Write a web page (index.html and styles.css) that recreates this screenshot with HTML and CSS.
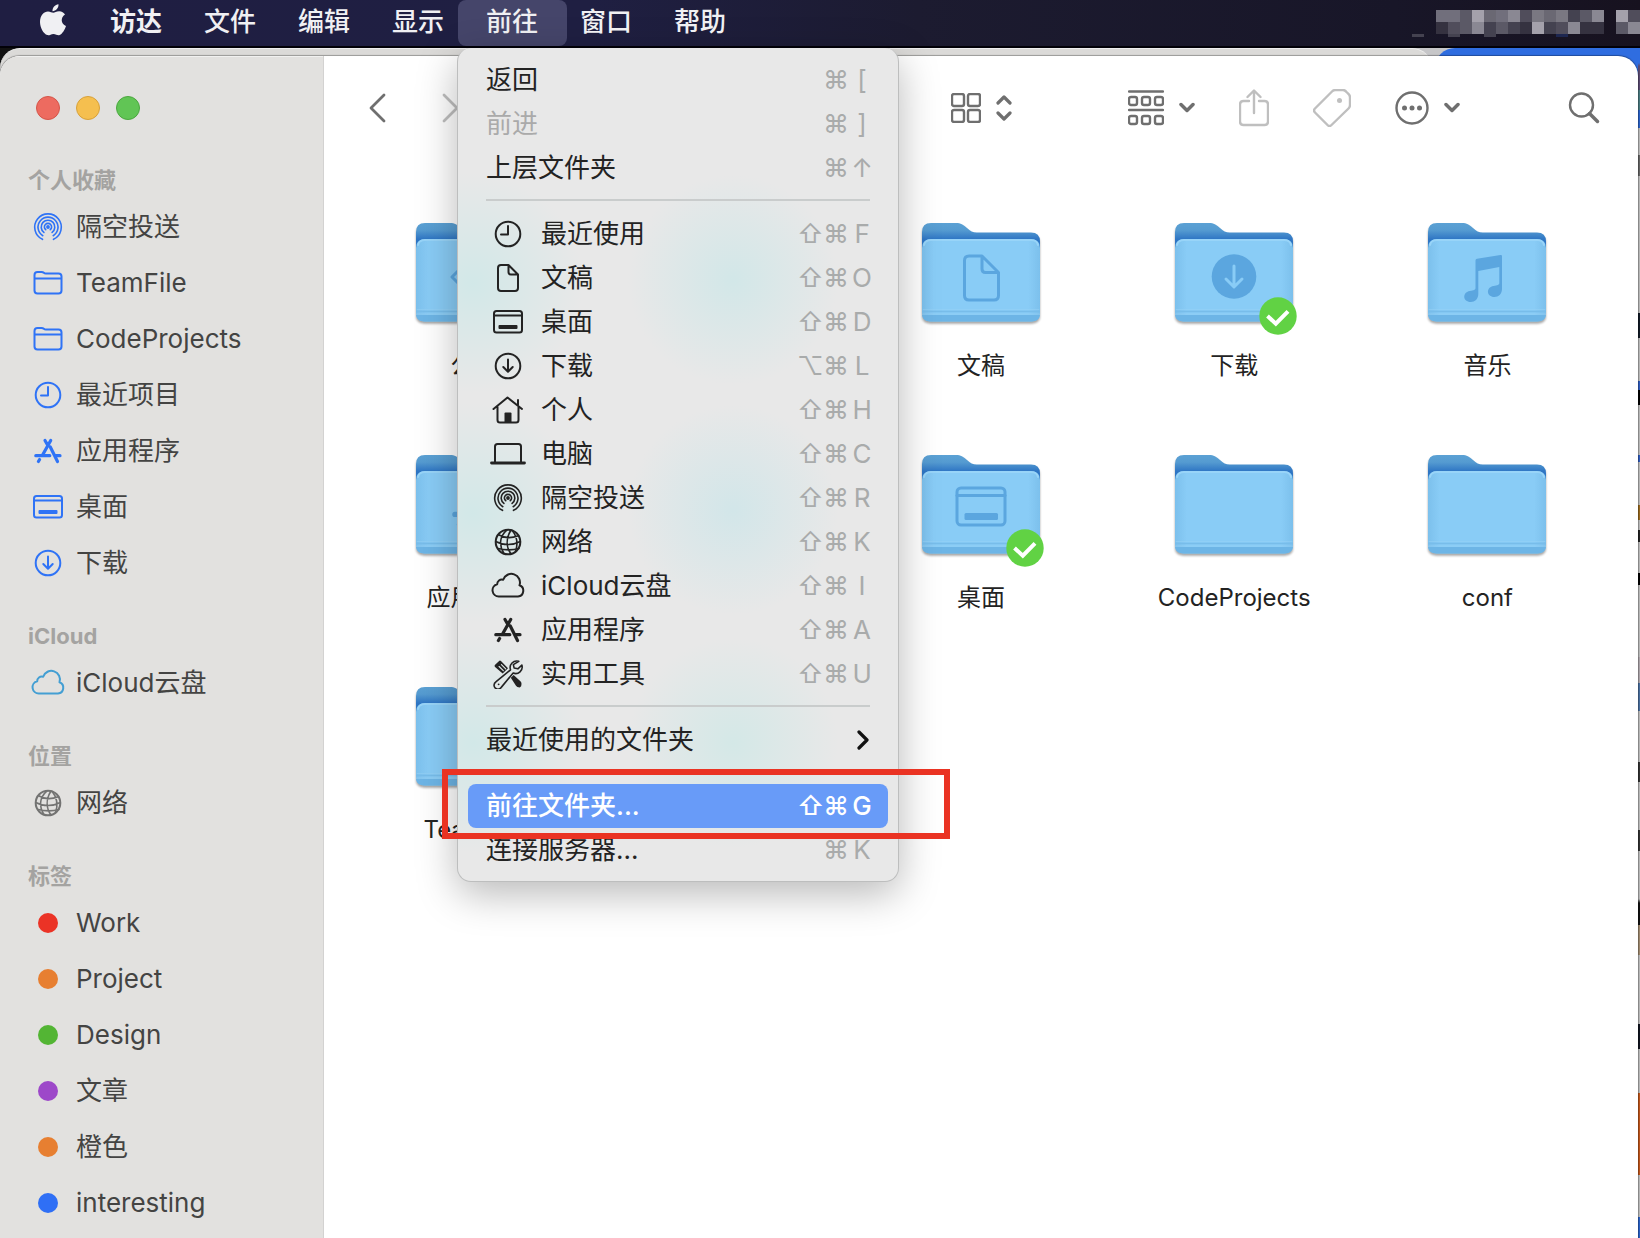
FILE: index.html
```html
<!DOCTYPE html>
<html lang="zh-CN">
<head>
  <meta charset="UTF-8" />
  <meta name="viewport" content="width=device-width, initial-scale=1.0" />
  <title>访达</title>
  <link rel="stylesheet" href="styles.css">
</head>
<body>
  <!-- shared icons -->
  <svg class="sprite" aria-hidden="true">
    <defs>
      <linearGradient id="back" x1="0" y1="0" x2="0" y2="1">
        <stop offset="0" stop-color="#5ba1d4" />
        <stop offset="0.08" stop-color="#559bd1" />
        <stop offset="0.18" stop-color="#2f76c4" />
      </linearGradient>
      <linearGradient id="front" x1="0" y1="0" x2="1" y2="0">
        <stop offset="0" stop-color="#7cc0ec" />
        <stop offset="0.1" stop-color="#89ccf6" />
        <stop offset="0.9" stop-color="#89ccf6" />
        <stop offset="1" stop-color="#7cc0ec" />
      </linearGradient>
    </defs>
    <symbol id="airdrop" viewBox="0 0 30 30">
      <circle cx="15" cy="15" r="1.900" fill="currentColor" stroke="none" />
      <path stroke-width="1.600" d="M9.500 27.300A13.300 13.300 0 1 1 20.500 27.300M9.800 23.700A10 10 0 1 1 20.200 23.700M10.900 20.400A6.800 6.800 0 1 1 19.100 20.400M12.700 17.700A3.600 3.600 0 1 1 17.300 17.700" />
    </symbol>
    <symbol id="folder" viewBox="0 0 30 30">
      <path d="M1.500 22.500V7q0-3 3-3h4q1.500 0 2.300.8t2.200.8h12.500q3 0 3 3v13.900q0 3-3 3h-21q-3 0-3-3zM1.500 10.500h27" />
    </symbol>
    <symbol id="clock" viewBox="0 0 30 30">
      <circle cx="15" cy="15" r="12.300" /><path d="M15 7v8.500H8" />
    </symbol>
    <symbol id="apps" viewBox="0 0 30 30">
      <path stroke-width="3.200" d="M17.700 4.500 9.300 19.500M12 4.500l2 3.500M17.300 11 24.500 25.500M2.800 19.700h14M22.500 19.700h4.500M6.600 23.500l-1.200 2" />
    </symbol>
    <symbol id="desktop" viewBox="0 0 30 30">
      <rect x="1" y="4" width="28" height="21.500" rx="2.500" /><path d="M1 8.500h28" />
      <rect x="5.500" y="18" width="19" height="4" rx="1" fill="currentColor" stroke="none" />
    </symbol>
    <symbol id="download" viewBox="0 0 30 30">
      <circle cx="15" cy="15" r="12.300" /><path d="M15 8.500v12M10.300 16l4.700 4.700 4.700-4.700" />
    </symbol>
    <symbol id="cloud" viewBox="0 0 34 30">
      <path d="M8 25.500a6.200 6.200 0 0 1-1.800-12.200 4.600 4.600 0 0 1 6-4.600 8.600 8.600 0 0 1 16.300 5.600 5.800 5.800 0 0 1-1.500 11.200z" />
    </symbol>
    <symbol id="globe" viewBox="0 0 30 30">
      <circle cx="15" cy="15" r="12.300" />
      <path d="M14 2.800c-8 7-8 16-3 23.800M18 3c-5 8-5 17 0 24M19 3.300c5 6 6 14 3.500 21.500M5.500 7.800c6 3.500 13 3.500 20 1M2.800 14.500c7 4 17 4 24.500 0M5 21.500c6 1.500 14 2 21 0" stroke-width="1.600" />
    </symbol>
    <symbol id="doc" viewBox="0 0 30 30">
      <path d="M15.500 2H8Q5 2 5 5v20q0 3 3 3h14q3 0 3-3V11.500zV9q0 2.500 2.500 2.500H25" />
    </symbol>
    <symbol id="home" viewBox="0 0 34 30">
      <path d="M2.500 14 16.500 2.500 31 14M6.500 12v13q0 2.500 2.500 2.500h16q2.500 0 2.500-2.500V12M27 10V5" />
      <path d="M13.500 27v-8.500q0-1 1-1h5q1 0 1 1V27z" fill="currentColor" stroke="none" />
    </symbol>
    <symbol id="laptop" viewBox="0 0 36 30">
      <path d="M5 23.500V7.500Q5 5 7.500 5h21Q31 5 31 7.500v16" /><path d="M1.500 24h33" stroke-width="2.800" />
    </symbol>
    <symbol id="tools" viewBox="0 0 32 32">
      <path fill="currentColor" stroke="none" d="M2 6.500 6.500 2q1-.8 2 .2l7.500 7.600-5.700 5.700L2.200 8.500q-.9-1-.2-2zM19 20l3-3 7.500 7q1.500 1.500.5 5l-1.500 1.500q-3-.5-4-2z" />
      <path d="M6.500 8 11 12.500M9 6l4.500 4.500" stroke="#e2e9e8" stroke-width="1.200" />
      <path d="M27.500 2.500a7 7 0 0 0-8.800 9L3 24.500a4.200 4.200 0 1 0 6 5.500L21.500 15a7 7 0 0 0 9.300-8.500l-4.300 4-4-1-.8-3.500z" fill="#e2e9e8" stroke-width="1.700" />
      <circle cx="6" cy="27" r="1" fill="currentColor" stroke="none" />
    </symbol>
    <symbol id="bigfolder" viewBox="0 0 118 100">
      <path fill="url(#back)" d="M0 9q0-9 9-9h25c5 0 7 1.500 11 5 3.500 3 5.500 4.500 10 4.500h54q9 0 9 9V90H0z" />
      <path fill="url(#front)" d="M0 25q0-8.500 8.500-8.500h101q8.500 0 8.500 8.500v65q0 8.500-8.500 8.500H8.500Q0 98.500 0 90z" />
      <path fill="#6db5e6" d="M0 92h118q-1 6.500-8.500 6.500H8.500Q1 98.500 0 92z" />
      <path stroke="#78bdea" stroke-width="1.500" d="M0 88.500h118" />
      <path stroke="#98d1f5" stroke-width="1" d="M1 91h116M1 86.500h116" opacity=".5" />
      <path stroke="#98d4f8" fill="none" d="M2 22q1-5 7-5h100q6 0 7 5" />
    </symbol>
    <symbol id="check" viewBox="0 0 38 38">
      <circle cx="19" cy="19" r="18.700" fill="#61d244" />
      <path d="m8.500 19 8.300 7.700L29 14.300" fill="none" stroke="#fff" stroke-width="4" stroke-linecap="butt" stroke-linejoin="miter" />
    </symbol>
    <symbol id="chevron" viewBox="0 0 16 12"><path d="m2 2.500 6 6 6-6" stroke-width="3.500" /></symbol>
  </svg>

  <header class="menubar">
    <button class="apple" aria-label="Apple">
      <svg viewBox="0 0 26 32" width="26" height="32"><path d="M18.500 0.300c.2 3.800-2.500 6.700-6 6.900C12.300 3.800 15 .7 18.500.3zM13.200 8.700c1.600 0 3-1.400 6-1.400 2.600.1 4.600 1.300 5.800 3.200-4.700 3-4.200 9.500 1 11.500-1 3.400-3.700 8-6.300 9-2.200.8-3.600-1.100-6.300-1.100-2.600 0-4 1.900-6.100 1.200C3.500 29.900 0 23.500 0 18c0-6.700 4-10.600 8-10.600 2.300 0 3.900 1.300 5.200 1.300z" /></svg>
    </button>
    <ul class="menus">
      <li><button class="menu-title app-name">访达</button></li>
      <li><button class="menu-title">文件</button></li>
      <li><button class="menu-title">编辑</button></li>
      <li><button class="menu-title">显示</button></li>
      <li class="open">
        <button class="menu-title">前往</button>
        <ul class="dropdown">
          <li><button class="item"><span>返回</span><kbd><i>⌘</i><i>[</i></kbd></button></li>
          <li><button class="item" disabled><span>前进</span><kbd><i>⌘</i><i>]</i></kbd></button></li>
          <li><button class="item"><span>上层文件夹</span><kbd><i>⌘</i><i>↑</i></kbd></button></li>
          <li class="separator"></li>
          <li><button class="item"><svg class="icon"><use href="#clock" /></svg><span>最近使用</span><kbd><i>⇧</i><i>⌘</i><i>F</i></kbd></button></li>
          <li><button class="item"><svg class="icon"><use href="#doc" /></svg><span>文稿</span><kbd><i>⇧</i><i>⌘</i><i>O</i></kbd></button></li>
          <li><button class="item"><svg class="icon"><use href="#desktop" /></svg><span>桌面</span><kbd><i>⇧</i><i>⌘</i><i>D</i></kbd></button></li>
          <li><button class="item"><svg class="icon"><use href="#download" /></svg><span>下载</span><kbd><i>⌥</i><i>⌘</i><i>L</i></kbd></button></li>
          <li><button class="item"><svg class="icon"><use href="#home" /></svg><span>个人</span><kbd><i>⇧</i><i>⌘</i><i>H</i></kbd></button></li>
          <li><button class="item"><svg class="icon"><use href="#laptop" /></svg><span>电脑</span><kbd><i>⇧</i><i>⌘</i><i>C</i></kbd></button></li>
          <li><button class="item"><svg class="icon"><use href="#airdrop" /></svg><span>隔空投送</span><kbd><i>⇧</i><i>⌘</i><i>R</i></kbd></button></li>
          <li><button class="item"><svg class="icon"><use href="#globe" /></svg><span>网络</span><kbd><i>⇧</i><i>⌘</i><i>K</i></kbd></button></li>
          <li><button class="item"><svg class="icon"><use href="#cloud" /></svg><span>iCloud云盘</span><kbd><i>⇧</i><i>⌘</i><i>I</i></kbd></button></li>
          <li><button class="item"><svg class="icon"><use href="#apps" /></svg><span>应用程序</span><kbd><i>⇧</i><i>⌘</i><i>A</i></kbd></button></li>
          <li><button class="item"><svg class="icon"><use href="#tools" /></svg><span>实用工具</span><kbd><i>⇧</i><i>⌘</i><i>U</i></kbd></button></li>
          <li class="separator"></li>
          <li><button class="item"><span>最近使用的文件夹</span><svg class="submenu" viewBox="0 0 12 20"><path d="m2 2 8 8-8 8" stroke-width="3.200" /></svg></button></li>
          <li class="separator"></li>
          <li class="marked"><button class="item selected"><span>前往文件夹...</span><kbd><i>⇧</i><i>⌘</i><i>G</i></kbd></button></li>
          <li><button class="item"><span>连接服务器...</span><kbd><i>⌘</i><i>K</i></kbd></button></li>
        </ul>
      </li>
      <li><button class="menu-title">窗口</button></li>
      <li><button class="menu-title">帮助</button></li>
    </ul>
    <!-- status area, masked out -->
    <svg class="mosaic" viewBox="0 0 228 46" width="228" height="46" shape-rendering="crispEdges">
      <g fill="#716f7c"><path d="M24 10h24v12H24zM84 10h12v12H84z" /></g>
      <g fill="#5b5966"><path d="M48 10h12v24H48zM84 22h12v12H84zM168 10h12v12h-12zM204 22h12v12h-12z" /></g>
      <g fill="#a4a1ab"><path d="M60 10h12v12H60zM120 22h12v12h-12zM204 10h12v12h-12z" /></g>
      <g fill="#8a8893"><path d="M60 22h12v12H60zM96 10h12v12H96zM156 22h12v12h-12zM180 10h12v12h-12zM216 22h12v12h-12z" /></g>
      <g fill="#6a6873"><path d="M72 10h12v12H72zM132 10h12v12h-12z" /></g>
      <g fill="#7a7882"><path d="M120 10h12v12h-12zM144 10h12v12h-12z" /></g>
      <g fill="#504d5b"><path d="M36 22h12v12H36zM108 10h12v12h-12zM144 22h12v12h-12zM216 10h12v12h-12z" /></g>
      <g fill="#444250"><path d="M0 34h12v3H0zM72 22h12v15H72zM96 22h12v12H96zM132 22h12v12h-12zM156 10h12v12h-12zM36 34h12v3H36z" /></g>
      <g fill="#353240"><path d="M24 22h12v12H24zM108 22h12v12h-12zM168 22h24v12h-24z" /></g>
      <path fill="#1d2650" d="M144 34h12v3h-12z" />
    </svg>
  </header>

  <main class="screen">
    <div class="behind">
      <div class="behind-gray"></div>
      <div class="behind-blue"></div>
    </div>

    <div class="window">
      <aside class="sidebar">
        <div class="lights">
          <button class="light close" aria-label="关闭"></button>
          <button class="light minimize" aria-label="最小化"></button>
          <button class="light zoom" aria-label="缩放"></button>
        </div>

        <nav class="section">
          <h2>个人收藏</h2>
          <a href="#"><svg class="icon"><use href="#airdrop" /></svg>隔空投送</a>
          <a href="#"><svg class="icon"><use href="#folder" /></svg>TeamFile</a>
          <a href="#"><svg class="icon"><use href="#folder" /></svg>CodeProjects</a>
          <a href="#"><svg class="icon"><use href="#clock" /></svg>最近项目</a>
          <a href="#"><svg class="icon"><use href="#apps" /></svg>应用程序</a>
          <a href="#"><svg class="icon"><use href="#desktop" /></svg>桌面</a>
          <a href="#"><svg class="icon"><use href="#download" /></svg>下载</a>
        </nav>
        <nav class="section">
          <h2>iCloud</h2>
          <a href="#"><svg class="icon cyan"><use href="#cloud" /></svg>iCloud云盘</a>
        </nav>
        <nav class="section">
          <h2>位置</h2>
          <a href="#"><svg class="icon gray"><use href="#globe" /></svg>网络</a>
        </nav>
        <nav class="section">
          <h2>标签</h2>
          <a href="#"><span class="dot red"></span>Work</a>
          <a href="#"><span class="dot orange"></span>Project</a>
          <a href="#"><span class="dot green"></span>Design</a>
          <a href="#"><span class="dot purple"></span>文章</a>
          <a href="#"><span class="dot orange"></span>橙色</a>
          <a href="#"><span class="dot blue"></span>interesting</a>
        </nav>
      </aside>

      <section class="content">
        <div class="toolbar">
          <button class="tool nav-back" aria-label="返回"><svg viewBox="0 0 18 30" width="18" height="30"><path d="M16 2 3 15l13 13" stroke-width="2.800" /></svg></button>
          <button class="tool" aria-label="前进" disabled><svg viewBox="0 0 18 30" width="18" height="30"><path d="m2 2 13 13L2 28" stroke-width="2.800" /></svg></button>
          <button class="tool view" aria-label="显示方式">
            <svg viewBox="0 0 30 30" width="30" height="30"><rect x="1" y="1" width="12" height="12" rx="2" /><rect x="17" y="1" width="12" height="12" rx="2" /><rect x="1" y="17" width="12" height="12" rx="2" /><rect x="17" y="17" width="12" height="12" rx="2" /></svg>
            <svg viewBox="0 0 16 28" width="16" height="28"><path d="m2 9 6-6 6 6M2 19l6 6 6-6" stroke-width="3.200" /></svg>
          </button>
          <button class="tool group" aria-label="分组">
            <svg viewBox="0 0 36 36" width="36" height="36"><path d="M1 1.500h34M1 20h34" /><rect x="1" y="7" width="8" height="8" rx="2" /><rect x="14" y="7" width="8" height="8" rx="2" /><rect x="27" y="7" width="8" height="8" rx="2" /><rect x="1" y="26" width="8" height="8" rx="2" /><rect x="14" y="26" width="8" height="8" rx="2" /><rect x="27" y="26" width="8" height="8" rx="2" /></svg>
            <svg width="16" height="12"><use href="#chevron" /></svg>
          </button>
          <button class="tool" aria-label="共享" disabled><svg viewBox="0 0 30 38" width="30" height="38"><path d="M10 12H4.500Q1 12 1 15.500v17Q1 36 4.500 36h21q3.500 0 3.500-3.500v-17Q29 12 25.500 12H20M15 24V2M8.500 8 15 1.500 21.500 8" /></svg></button>
          <button class="tool" aria-label="标签" disabled><svg viewBox="0 0 38 38" width="38" height="38"><path d="M19 2.500Q20.500 1 22.500 1H30q2 0 3.500 2l1.500 1.500q2 1.500 2 4V16q0 2-1.500 3.500L18.500 36q-2 2-4 0L2 23.500q-2-2 0-4z" /><circle cx="26.500" cy="11.500" r="2.500" fill="currentColor" stroke="none" /></svg></button>
          <button class="tool" aria-label="更多">
            <svg viewBox="0 0 34 34" width="34" height="34"><circle cx="17" cy="17" r="15.500" /><g fill="currentColor" stroke="none"><circle cx="9.500" cy="17" r="2.500" /><circle cx="17" cy="17" r="2.500" /><circle cx="24.500" cy="17" r="2.500" /></g></svg>
            <svg width="16" height="12"><use href="#chevron" /></svg>
          </button>
          <button class="tool search" aria-label="搜索"><svg viewBox="0 0 32 32" width="32" height="32"><circle cx="13.500" cy="13" r="11.500" /><path d="m21.500 21.500 8 8" stroke-width="3.500" /></svg></button>
        </div>

        <ul class="files">
          <li><a href="#" class="file">
            <span class="thumb"><svg class="big"><use href="#bigfolder" /></svg><svg class="glyph" viewBox="0 0 118 100"><path d="M36 54 59 31l23 23-23 23z" /></svg></span>
            <span>公共</span></a></li>
          <li></li>
          <li><a href="#" class="file">
            <span class="thumb"><svg class="big"><use href="#bigfolder" /></svg><svg class="glyph" viewBox="0 0 118 100"><path d="M60 33H47q-4.500 0-4.500 4.500v35q0 4.500 4.500 4.500h25q4.500 0 4.500-4.500v-23zv13q0 3.500 3.500 3.500h13" /></svg></span>
            <span>文稿</span></a></li>
          <li><a href="#" class="file">
            <span class="thumb"><svg class="big"><use href="#bigfolder" /></svg><svg class="glyph" viewBox="0 0 118 100"><circle cx="59" cy="53.500" r="22.300" fill="currentColor" stroke="none" /><path d="M59 43v20M51 56l8 8 8-8" stroke="#89ccf6" /></svg><svg class="badge"><use href="#check" /></svg></span>
            <span>下载</span></a></li>
          <li><a href="#" class="file">
            <span class="thumb"><svg class="big"><use href="#bigfolder" /></svg><svg class="glyph" viewBox="0 0 118 100"><path fill="currentColor" stroke="none" d="M47.500 37.500q0-1.500 1.500-1.800L72.500 32q1.500-.2 1.500 1v33c0 5-3.500 8-7.500 8-8 0-9-9.500-1-11 4-.8 5.800-1 5.800-3V44l-21 4v23c0 5-3.500 8-7.500 8-8 0-9-9.500-1-11 4-.8 5.700-1 5.700-3z" /></svg></span>
            <span>音乐</span></a></li>
          <li><a href="#" class="file">
            <span class="thumb"><svg class="big"><use href="#bigfolder" /></svg><svg class="glyph" viewBox="0 0 118 100"><g transform="translate(34 25) scale(1.750)"><path stroke-width="3" d="M17.700 4.500 9.300 19.500M12 4.500l2 3.500M17.300 11 24.500 25.500M2.800 19.700h14M22.500 19.700h4.500M6.600 23.500l-1.200 2" /></g></svg></span>
            <span>应用程序</span></a></li>
          <li></li>
          <li><a href="#" class="file">
            <span class="thumb"><svg class="big"><use href="#bigfolder" /></svg><svg class="glyph" viewBox="0 0 118 100"><rect x="35" y="33" width="48" height="37" rx="4" /><path d="M35 40.500h48" /><rect x="42.500" y="58" width="33.500" height="7" rx="1.500" fill="currentColor" stroke="none" /></svg><svg class="badge"><use href="#check" /></svg></span>
            <span>桌面</span></a></li>
          <li><a href="#" class="file"><span class="thumb"><svg class="big"><use href="#bigfolder" /></svg></span><span>CodeProjects</span></a></li>
          <li><a href="#" class="file"><span class="thumb"><svg class="big"><use href="#bigfolder" /></svg></span><span>conf</span></a></li>
          <li><a href="#" class="file"><span class="thumb"><svg class="big"><use href="#bigfolder" /></svg></span><span>TeamFile</span></a></li>
        </ul>
      </section>
    </div>
  </main>
</body>
</html>
```
FILE: styles.css
```css
* {
  box-sizing: border-box;
}
body {
  margin: 0;
  height: 100vh;
  display: flex;
  flex-direction: column;
  overflow: hidden;
  font-family: Inter, "Noto Sans CJK SC", sans-serif;
  font-size: 26px;
  line-height: 36px;
  color: #232323;
}
ul {
  list-style: none;
  margin: 0;
  padding: 0;
}
button {
  font: inherit;
  color: inherit;
  background: none;
  border: none;
  padding: 0;
}
a {
  color: inherit;
  text-decoration: none;
}
svg {
  display: block;
  fill: none;
  stroke: currentColor;
  stroke-width: 2;
  stroke-linecap: round;
  stroke-linejoin: round;
}
.sprite {
  position: absolute;
  width: 0;
  height: 0;
}
.icon {
  flex: none;
  width: 40px;
  height: 30px;
}

/* menu bar */
.menubar {
  flex: none;
  height: 48px;
  display: flex;
  border-bottom: 2px solid #020108;
  background: linear-gradient(to right, #1f1e42, #1f1f42 36%, #1c1b30 56%, #181628 85%, #17121f);
  color: #f0f0f3;
  position: relative;
  z-index: 2;
}
.apple {
  width: 42px;
  margin-left: 40px;
}
.apple svg, .mosaic {
  stroke: none;
}
.apple svg {
  fill: currentColor;
  margin-bottom: 6px;
}
.menus {
  display: flex;
}
.menus > li {
  margin-right: -14px;
  position: relative;
}
.menu-title {
  height: 46px;
  padding: 0 29px 2px 28px;
  font-weight: 500;
  margin-right: -1px;
}
.app-name {
  font-weight: 700;
}
.open .menu-title {
  background: #45456a;
  border-radius: 8px;
}
.mosaic {
  margin-left: auto;
}

/* drop-down */
.dropdown {
  position: absolute;
  top: 48px;
  left: -1px;
  width: 442px;
  padding: 10px 10px 9px;
  border: 1px solid #bdbebe;
  border-top: none;
  border-radius: 14px;
  color: #232323;
  background:
    radial-gradient(circle at 275px 232px, #d2e7e8, rgba(210, 231, 232, 0) 105px),
    radial-gradient(circle at 275px 462px, #d2e6e9, rgba(210, 230, 233, 0) 105px),
    radial-gradient(circle at 275px 695px, #d4e8e7, rgba(212, 232, 231, 0) 105px),
    radial-gradient(circle at 15px 235px, #d2e8e8, rgba(210, 232, 232, 0) 110px),
    radial-gradient(circle at 15px 465px, #d2e8e8, rgba(210, 232, 232, 0) 110px),
    radial-gradient(circle at 15px 695px, #d2e8e8, rgba(210, 232, 232, 0) 110px),
    #e8e8e8;
  box-shadow: 0 12px 40px rgba(0, 0, 0, 0.28);
}
.item {
  display: flex;
  align-items: center;
  width: 100%;
  height: 44px;
  padding: 0 13px 0 18px;
  border-radius: 8px;
}
.item:disabled {
  color: #aaaaaa;
}
.item .icon {
  margin-right: 13px;
  margin-left: 2px;
}
.item kbd {
  margin-left: auto;
  display: flex;
  font: inherit;
  color: #a9abab;
}
.item i {
  width: 26px;
  font-style: normal;
  text-align: center;
}
.submenu {
  width: 12px;
  height: 20px;
  margin: 0 6px 0 auto;
  color: #111;
}
.selected, .selected kbd {
  color: #fff;
}
.selected {
  background: #689bf8;
  font-weight: 500;
}
.separator {
  height: 2px;
  margin: 9px 18px 11px;
  background: #c9cccc;
}
.marked {
  position: relative;
}
.marked::after {
  content: "";
  position: absolute;
  inset: -15px -62px -11px -26px;
  border: 6px solid #ea3323;
  z-index: 1;
  pointer-events: none;
}

/* what shows around the finder window */
.screen {
  flex: 1;
  min-height: 0;
  display: flex;
  position: relative;
  padding: 8px 2px 0 0;
  background: linear-gradient(#2f6de0 15px, #5a4a72 18px 42px, #4a7a80 42px 62px, #2a62c8 62px 80px,
    #bcbcbc 80px 107px, #666 107px 128px, #bcbcbc 128px 265px, #111a26 265px 290px, #bcbcbc 290px 333px,
    #2f5cc0 333px 342px, #000 342px 357px, #bcbcbc 357px 407px, #2f5cc0 407px 414px, #bcbcbc 414px 457px,
    #9a6a1e 457px 472px, #bcbcbc 472px 482px, #222 482px 494px, #bcbcbc 494px 525px, #000 525px 537px,
    #bcbcbc 537px 609px, #aea7ac 609px 635px, #4a70a0 635px 663px, #bcbcbc 663px 714px, #333 714px 734px,
    #bcbcbc 734px 782px, #333 782px 803px, #bcbcbc 803px 851px, #111 855px 877px, #a08a70 877px 907px,
    #bcbcbc 907px 976px, #10141f 976px 1001px, #bcbcbc 1001px 1045px, #c0561a 1045px 1127px,
    #bcbcbc 1127px 1169px, #2a62c8 1169px);
}
.behind {
  position: absolute;
  inset: 0 0 auto 0;
  height: 30px;
  display: flex;
  background: linear-gradient(to right, #111 50%, #c6c6c8 50%);
  margin-right: 2px;
}
.behind-gray {
  flex: 1;
  border-radius: 20px 20px 0 0;
  background: #dbdad8;
  border-top: 1px solid #eee;
}
.behind-blue {
  width: 203px;
  margin-left: 3px;
  border-radius: 20px 0 0 0;
  background: #2f6de0;
}
.window {
  flex: 1;
  display: flex;
  position: relative;
  border-radius: 20px 20px 0 0;
  overflow: hidden;
  background: #fff;
  box-shadow: 0 0 1px 1px rgba(0, 0, 0, 0.3);
}

/* sidebar */
.sidebar {
  flex: none;
  width: 324px;
  padding: 40px 0 0 28px;
  background: #e2e1df;
  border-right: 1px solid #d3d2d1;
  box-shadow: inset 0 1px #f1f1f0;
  color: #444443;
}
.lights {
  display: flex;
  gap: 16px;
  padding-left: 8px;
  margin-bottom: 41px;
}
.light {
  width: 24px;
  height: 24px;
  border-radius: 50%;
}
.close {
  background: #ed6b60;
  border: 1px solid #d55549;
}
.minimize {
  background: #f5bf4f;
  border: 1px solid #d8a13a;
}
.zoom {
  background: #61c555;
  border: 1px solid #4ba73f;
}
.section {
  margin-bottom: 26px;
}
.section h2 {
  margin: 0;
  font-size: 22px;
  font-weight: 700;
  line-height: 38px;
  color: #a4a3a1;
}
.section a {
  display: flex;
  align-items: center;
  height: 56px;
  gap: 8px;
}
.section .icon {
  color: #2f73f6;
}
.section .cyan {
  color: #449fd3;
}
.section .gray {
  color: #737372;
}
.dot {
  width: 20px;
  height: 20px;
  margin: 0 10px;
  border-radius: 50%;
}
.red { background: #eb3326; }
.orange { background: #e77f31; }
.green { background: #53b534; }
.purple { background: #9d48c9; }
.blue { background: #2f6ff5; }

/* toolbar and files */
.content {
  flex: 1;
}
.toolbar {
  display: flex;
  align-items: center;
  gap: 44px;
  height: 103px;
  padding: 0 38px 0 44px;
  color: #6f6f6f;
}
.tool {
  display: flex;
  align-items: center;
  gap: 15px;
}
.tool svg {
  stroke-width: 2.400;
}
.tool:disabled {
  color: #bfbfbf;
}
.nav-back {
  margin-right: 12px;
}
.view {
  margin-left: auto;
}
.group {
  margin-left: 72px;
}
.search {
  margin-left: 64px;
}
.files {
  display: grid;
  grid-template-columns: repeat(5, 1fr);
  padding: 64px 24px 0;
}
.files li {
  height: 232px;
}
.file {
  display: flex;
  flex-direction: column;
  align-items: center;
  gap: 25px;
  font-size: 24px;
}
.thumb {
  position: relative;
  width: 118px;
  height: 100px;
}
.big {
  width: 118px;
  height: 100px;
  stroke: none;
  filter: drop-shadow(0 2px 1px rgba(0, 0, 0, 0.35));
}
.glyph {
  position: absolute;
  inset: 0;
  color: #5ba6df;
  stroke-width: 3;
}
.badge {
  position: absolute;
  right: -4px;
  bottom: -12px;
  width: 38px;
  height: 38px;
  stroke: none;
}
```
